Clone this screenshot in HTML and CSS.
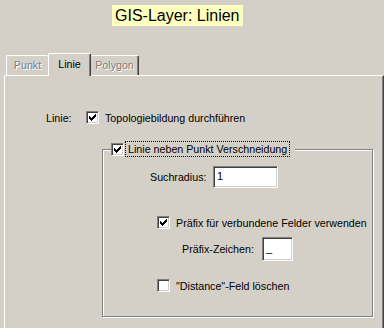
FILE: index.html
```html
<!DOCTYPE html>
<html lang="de">
<head>
    <meta charset="UTF-8">
    <meta name="viewport" content="width=device-width, initial-scale=1.0">
    <title>GIS-Layer: Linien</title>
    <link rel="stylesheet" href="styles.css">
</head>
<body>

<div class="title-row">
    <span class="title">GIS-Layer: Linien</span>
</div>

<!-- Tabs -->
<div class="tabs">
    <div class="tab tab-off tab-first">Punkt</div>
    <div class="tab tab-on">Linie</div>
    <div class="tab tab-off tab-last">Polygon</div>
</div>

<div class="panel">
    <div class="row row-topo">
        <span class="lbl-linie">Linie:</span>
        <span class="check"><svg viewBox="0 0 7 7" width="7" height="7"><path d="M6 0h1v1h-1zM5 1h2v1h-2zM0 2h1v1h-1zM4 2h3v1h-3zM0 3h2v1h-2zM3 3h3v1h-3zM0 4h5v1h-5zM1 5h3v1h-3zM2 6h1v1h-1z" fill="#000"/></svg></span>
        <span class="txt">Topologiebildung durchführen</span>
    </div>

    <!-- Verschneidung group -->
    <fieldset class="group">
        <legend class="group-title">
            <span class="check"><svg viewBox="0 0 7 7" width="7" height="7"><path d="M6 0h1v1h-1zM5 1h2v1h-2zM0 2h1v1h-1zM4 2h3v1h-3zM0 3h2v1h-2zM3 3h3v1h-3zM0 4h5v1h-5zM1 5h3v1h-3zM2 6h1v1h-1z" fill="#000"/></svg></span>
            <span class="focus">Linie neben Punkt Verschneidung</span>
        </legend>

        <div class="row row-such">
            <span class="lbl-such">Suchradius:</span>
            <span class="edit edit-such">1</span>
        </div>

        <div class="row row-check row-prefix">
            <span class="check"><svg viewBox="0 0 7 7" width="7" height="7"><path d="M6 0h1v1h-1zM5 1h2v1h-2zM0 2h1v1h-1zM4 2h3v1h-3zM0 3h2v1h-2zM3 3h3v1h-3zM0 4h5v1h-5zM1 5h3v1h-3zM2 6h1v1h-1z" fill="#000"/></svg></span>
            <span class="txt">Präfix für verbundene Felder verwenden</span>
        </div>

        <div class="row row-char">
            <span class="lbl-char">Präfix-Zeichen:</span>
            <span class="edit edit-char">_</span>
        </div>

        <div class="row row-check row-distance">
            <span class="check"></span>
            <span class="txt">"Distance"-Feld löschen</span>
        </div>
    </fieldset>
</div>

</body>
</html>
```

FILE: styles.css
```css
* {
    box-sizing: border-box;
}

html, body {
    margin: 0;
    background-color: #d4d0c8;
}

body {
    width: 384px;
    height: 328px;
    overflow: hidden;
    font-family: "Liberation Sans", Arial, sans-serif;
    font-size: 10.7px;
    color: #000;
}

.title-row {
    height: 53px;
    padding: 5px 0 0 112px;
}

.title {
    display: inline-block;
    background-color: #ffffc0;
    font-size: 16px;
    line-height: 21px;
    padding: 0 3px;
}

/* Tabs */
.tabs {
    display: flex;
    align-items: flex-end;
    height: 22px;
    padding-left: 6px;
    position: relative;
    z-index: 1;
}

.tab {
    height: 20px;
    line-height: 19px;
    text-align: center;
    border-top: 1px solid #fff;
    border-left: 1px solid #fff;
    border-right: 1px solid #404040;
    box-shadow: inset -1px 0 0 #808080;
    border-radius: 2px 2px 0 0;
    background-color: #d4d0c8;
}

.tab-off {
    color: #808080;
    text-shadow: 1px 1px 0 #fff;
}

.tab-first {
    width: 42px;
    border-right: none;
    box-shadow: none;
}

.tab-on {
    width: 43px;
    height: 23px;
    line-height: 20px;
    margin-bottom: -1px;
}

.tab-last {
    width: 48px;
    border-left: none;
}

/* Panel */
.panel {
    margin-left: 4px;
    height: 253px;
    border-top: 1px solid #fff;
    border-left: 1px solid #fff;
    border-right: 1px solid #404040;
    box-shadow: inset -1px 0 0 #808080;
}

.row {
    display: flex;
    align-items: center;
}

.row-topo {
    height: 13px;
    margin-top: 35px;
    padding-left: 41px;
}

.lbl-linie {
    width: 40px;
}

.txt {
    margin-left: 6px;
    white-space: nowrap;
}

/* Classic sunken checkbox */
.check {
    flex: none;
    width: 13px;
    height: 13px;
    background-color: #fff;
    border: 1px solid;
    border-color: #808080 #fff #fff #808080;
    box-shadow: inset 1px 1px 0 #404040, inset -1px -1px 0 #d4d0c8;
}

.check svg {
    display: block;
    margin: 2px 0 0 2px;
}

/* Group box */
.group {
    width: 271px;
    min-width: 0;
    margin: 17px 0 0 97px;
    padding: 9px 0 24px 0;
    border: 1px solid #808080;
    box-shadow: inset 1px 1px 0 #fff, 1px 1px 0 #fff;
}

.group-title {
    display: flex;
    align-items: center;
    height: 16px;
    margin-left: 8px;
    padding: 0 5px 0 0;
    background-color: #d4d0c8;
}

.focus {
    margin-left: 1px;
    padding: 0 2px;
    line-height: 14px;
    border: 1px dotted #000;
    white-space: nowrap;
}

/* Edit fields */
.edit {
    flex: none;
    background-color: #fff;
    border: 1px solid;
    border-color: #808080 #fff #fff #808080;
    box-shadow: inset 1px 1px 0 #404040, inset -1px -1px 0 #d4d0c8;
    padding-left: 3px;
    font-size: 11px;
}

.row-such {
    height: 22px;
    padding-left: 47px;
}

.lbl-such {
    width: 63px;
}

.edit-such {
    width: 65px;
    height: 22px;
    line-height: 19px;
}

.row-check {
    height: 13px;
    padding-left: 54px;
}

.row-prefix {
    margin-top: 28px;
}

.row-char {
    height: 24px;
    margin-top: 8px;
    padding-left: 79px;
}

.lbl-char {
    width: 80px;
}

.edit-char {
    width: 31px;
    height: 24px;
    line-height: 20px;
}

.row-distance {
    margin-top: 18px;
}
```
